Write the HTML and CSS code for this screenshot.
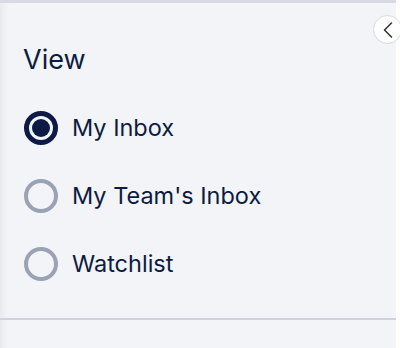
FILE: index.html
```html
<!DOCTYPE html>
<html>
<head>
<meta charset="utf-8">
<link rel="stylesheet" href="styles.css">
</head>
<body>
<div class="page">
  <aside class="panel">
    <button class="collapse" aria-label="Collapse">
      <svg width="14" height="18" viewBox="0 0 14 18"><path d="M10.5 2 L3.5 9 L10.5 16" fill="none" stroke="#2b2f3a" stroke-width="1.5" stroke-linecap="round" stroke-linejoin="round"/></svg>
    </button>
    <div class="section">
      <h2 class="title">View</h2>
      <ul class="options">
        <li class="option"><span class="radio checked"></span><span class="label">My Inbox</span></li>
        <li class="option"><span class="radio"></span><span class="label">My Team's Inbox</span></li>
        <li class="option"><span class="radio"></span><span class="label">Watchlist</span></li>
      </ul>
    </div>
    <div class="divider"></div>
  </aside>
  <div class="side"></div>
</div>
</body>
</html>
```
FILE: styles.css
```css
html, body {
  margin: 0;
  padding: 0;
  background: #ffffff;
}
.page {
  display: flex;
  width: 400px;
  height: 348px;
  overflow: hidden;
}
.panel {
  position: relative;
  width: 396px;
  height: 348px;
  box-sizing: border-box;
  background: #f2f4f7;
  border-top: 3px solid #d8dae3;
  box-shadow: inset 10px 0 8px -8px rgba(0, 0, 0, 0.06);
  font-family: Inter, "Noto Sans", sans-serif;
  color: #0d1b42;
}
.side {
  flex: 1;
  background: #ffffff;
}
.collapse {
  position: absolute;
  top: 12px;
  left: 373px;
  width: 29px;
  height: 29px;
  padding: 0;
  border-radius: 50%;
  background: #ffffff;
  border: 1px solid #d6d9e0;
  display: flex;
  align-items: center;
  justify-content: center;
  z-index: 2;
}
.section {
  padding: 41px 0 0 23px;
  height: 315px;
  box-sizing: border-box;
}
.title {
  margin: 0;
  font-size: 27px;
  font-weight: 400;
  line-height: 32px;
}
.options {
  list-style: none;
  margin: 35px 0 0 0;
  padding: 0;
  display: flex;
  flex-direction: column;
  gap: 34px;
}
.option {
  display: flex;
  align-items: center;
  gap: 14px;
  height: 34px;
}
.radio {
  width: 34px;
  height: 34px;
  flex: none;
  margin-left: 1px;
  box-sizing: border-box;
  border-radius: 50%;
  border: 4px solid #9aa2b3;
  display: flex;
  align-items: center;
  justify-content: center;
}
.radio.checked {
  border: 5px solid #0c1a45;
}
.radio.checked::after {
  content: "";
  width: 18px;
  height: 18px;
  border-radius: 50%;
  background: #0c1a45;
}
.label {
  font-size: 23.5px;
  line-height: 28px;
}
.divider {
  height: 2px;
  background: #cfd3dd;
}
```
